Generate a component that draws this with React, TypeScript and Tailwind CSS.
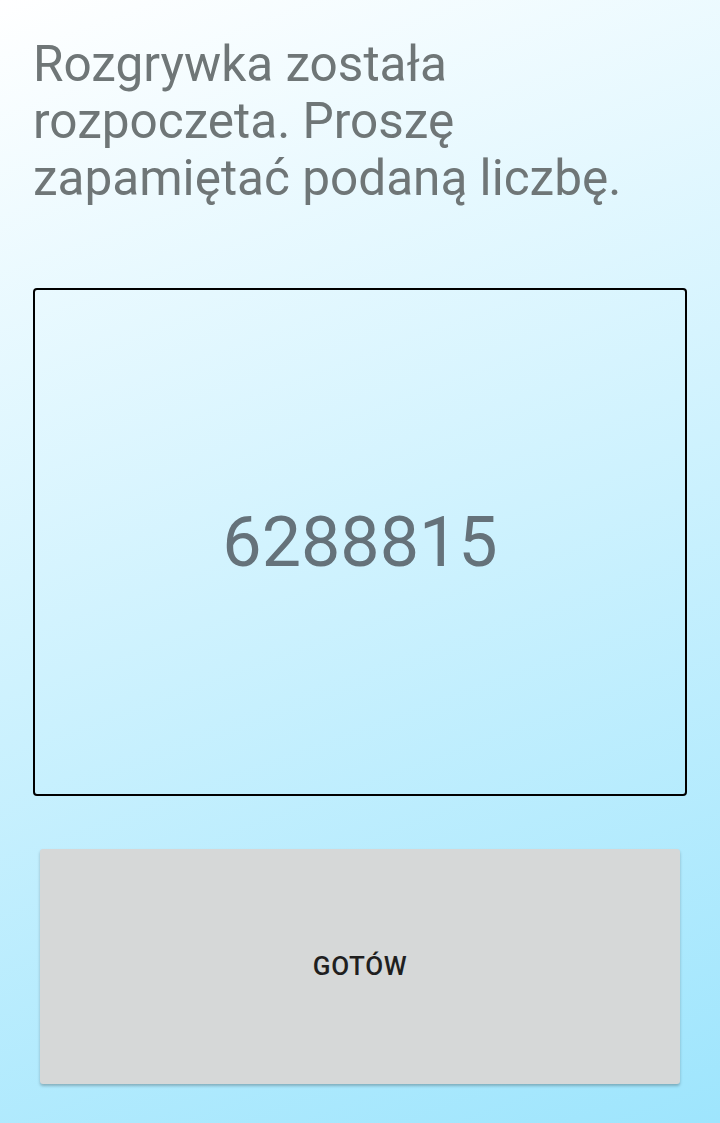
export default function App() {
  return (
    <div
      className="w-[720px] h-[1123px] overflow-hidden bg-linear-[160deg] from-white to-[#9ee5fd] flex flex-col px-[33px] pt-[36px]"
      style={{ fontFamily: "Roboto, 'Noto Sans', sans-serif" }}
    >
      <h1 className="text-[49.5px] leading-[57px] text-[#6f7677] font-normal">
        Rozgrywka została rozpoczeta. Proszę zapamiętać podaną liczbę.
      </h1>
      <div className="mt-[81px] h-[508px] border-2 border-black rounded-[4px] flex items-center justify-center">
        <span className="text-[70px] text-[#65727a] leading-none">6288815</span>
      </div>
      <button className="mt-[53px] mx-[7px] h-[235px] bg-[#d6d8d8] rounded-[3px] shadow-[0_2px_3px_rgba(0,0,0,0.25)] flex items-center justify-center">
        <span className="text-[26px] font-medium tracking-[0.6px] text-[#1f1f1f]">
          GOTÓW
        </span>
      </button>
    </div>
  );
}
